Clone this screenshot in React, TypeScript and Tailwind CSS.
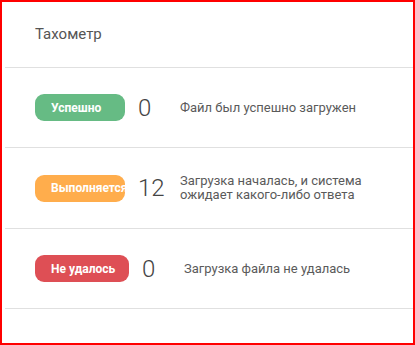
const rows = [
  {
    label: 'Успешно',
    badge: 'bg-[#66bb84] w-[90px]',
    count: 0,
    text: 'Файл был успешно загружен',
    h: 'h-[80px]',
  },
  {
    label: 'Выполняется',
    badge: 'bg-[#ffad4c] w-[90px]',
    count: 12,
    text: 'Загрузка началась, и система ожидает какого-либо ответа',
    h: 'h-[81px]',
  },
  {
    label: 'Не удалось',
    badge: 'bg-[#de4f55] w-[94px]',
    count: 0,
    text: 'Загрузка файла не удалась',
    h: 'h-[80px]',
  },
]

const App = () => {
  return (
    <div
      className="w-[415px] h-[345px] border-2 border-[#ff0000] bg-white overflow-hidden"
      style={{ fontFamily: 'Roboto, "Noto Sans", sans-serif' }}
    >
      <div className="ml-[3px]">
        <div className="h-[66px] flex items-center pl-[30px] border-b border-[#e0e0e0] text-[15px] text-[#555]">
          Тахометр
        </div>
        {rows.map((row) => (
          <div
            key={row.label}
            className={`${row.h} flex items-center pl-[30px] border-b border-[#e0e0e0]`}
          >
            <div
              className={`${row.badge} h-[27px] rounded-[9px] flex items-center pl-[16px] overflow-hidden whitespace-nowrap shrink-0 text-white text-[12px] font-bold`}
            >
              {row.label}
            </div>
            <div className="w-[42px] ml-[13px] shrink-0 text-[24px] font-light leading-none text-[#444]">
              {row.count}
            </div>
            <div className="w-[200px] text-[13px] leading-[14px] text-[#5a5a5a]">{row.text}</div>
          </div>
        ))}
      </div>
    </div>
  )
}

export default App
